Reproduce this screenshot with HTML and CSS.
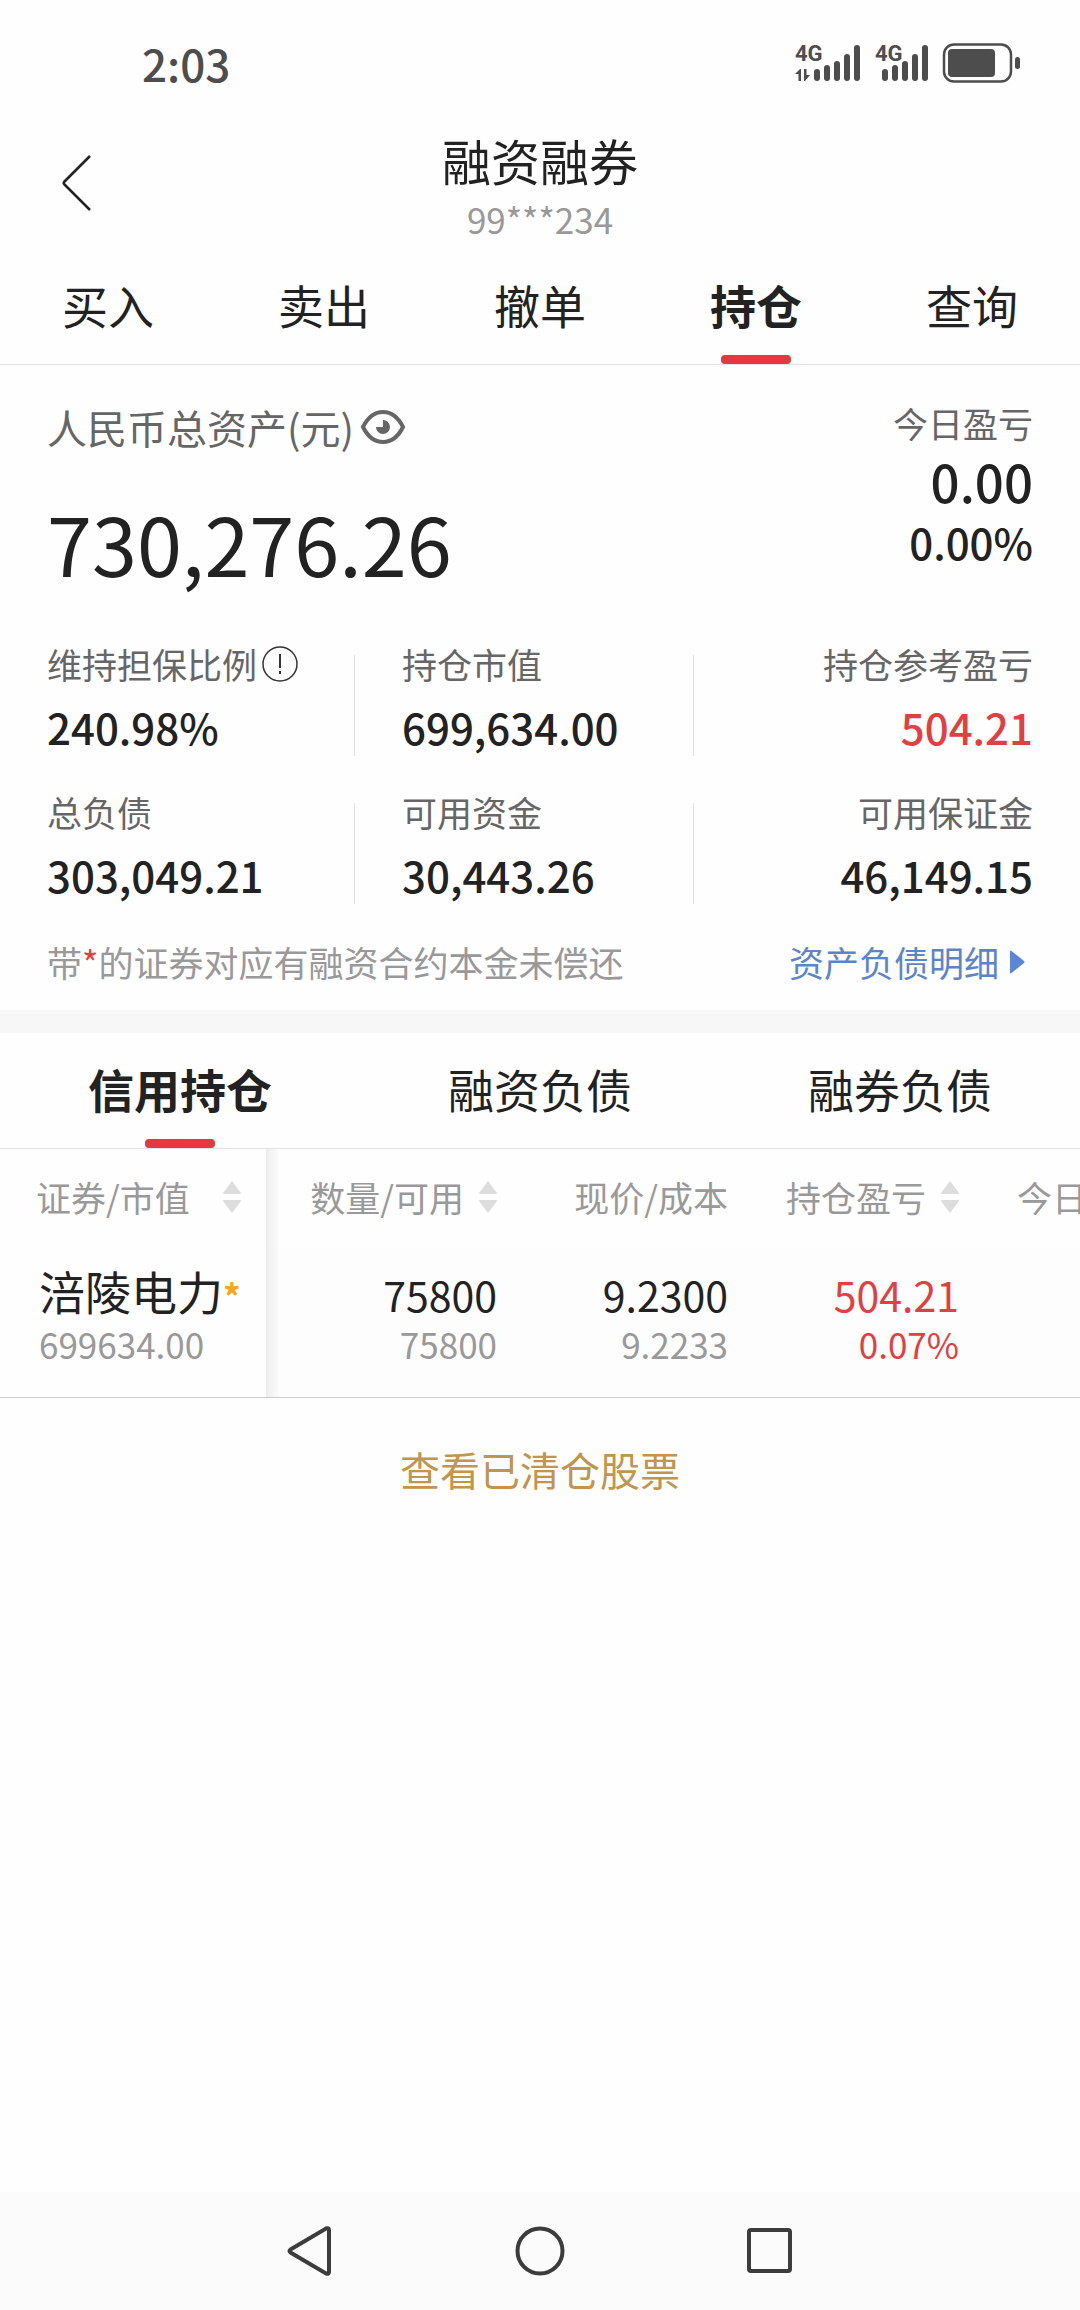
FILE: index.html
```html
<!DOCTYPE html>
<html lang="zh-CN">
<head>
    <meta charset="UTF-8">
    <meta name="viewport" content="width=device-width, initial-scale=1.0">
    <link rel="stylesheet" href="styles.css">
    <title>融资融券</title>
</head>
<body>
    <div class="status-bar">
        <span class="time">2:03</span>
        <svg class="status-icons" width="226" height="40" viewBox="0 0 226 40" aria-hidden="true">
            <g fill="#4d4d4d">
                <text class="net" x="0" y="18">4G</text>
                <path d="M0 31l5-5h1v12H3.500v-7zM9 26h2.500v6H15l-5 6H9z"/>
                <rect x="19" y="26" width="6" height="12" rx="3"/>
                <rect x="29" y="22" width="6" height="16" rx="3"/>
                <rect x="39" y="18" width="6" height="20" rx="3"/>
                <rect x="49" y="11" width="6" height="27" rx="3"/>
                <rect x="59" y="2" width="6" height="36" rx="3"/>
                <text class="net" x="80" y="18">4G</text>
                <rect x="87" y="26" width="6" height="12" rx="3"/>
                <rect x="97" y="22" width="6" height="16" rx="3"/>
                <rect x="107" y="18" width="6" height="20" rx="3"/>
                <rect x="117" y="11" width="6" height="27" rx="3"/>
                <rect x="127" y="2" width="6" height="36" rx="3"/>
                <rect x="153" y="6" width="47" height="28" rx="4"/>
                <rect x="220" y="14" width="5" height="12" rx="2.500"/>
            </g>
            <rect x="149" y="1.500" width="67" height="37" rx="10" fill="none" stroke="#4d4d4d" stroke-width="2.500"/>
        </svg>
    </div>

    <header class="header">
        <button type="button" class="back" aria-label="返回">
            <svg width="30" height="58" viewBox="0 0 30 58"><path d="M28 2L2.500 27.500q-1.500 1.500 0 3L28 56" fill="none" stroke="#222" stroke-width="2.500"/></svg>
        </button>
        <div class="heading">
            <h1>融资融券</h1>
            <p class="account">99***234</p>
        </div>
    </header>

    <nav class="tabs">
        <a href="#">买入</a>
        <a href="#">卖出</a>
        <a href="#">撤单</a>
        <a href="#" class="active">持仓</a>
        <a href="#">查询</a>
    </nav>

    <section class="summary">
        <div class="total">
            <div>
                <div class="total-label">
                    <span>人民币总资产(元)</span>
                    <button type="button" aria-label="隐藏金额">
                        <svg width="46" height="36" viewBox="0 0 46 36">
                            <path d="M3 18C8 8 15 3 23 3s15 5 20 15c-5 10-12 15-20 15S8 28 3 18z" fill="none" stroke="#666" stroke-width="4"/>
                            <path d="M23 11v7h-7a7 7 0 1 0 7-7z" fill="#666"/>
                        </svg>
                    </button>
                </div>
                <p class="total-value">730,276.26</p>
            </div>
            <div class="today">
                <p class="today-label">今日盈亏</p>
                <p class="today-value">0.00</p>
                <p class="today-rate">0.00%</p>
            </div>
        </div>

        <dl class="stats">
            <div class="stat">
                <dt>维持担保比例
                    <button type="button" aria-label="说明">
                        <svg width="36" height="36" viewBox="0 0 36 36">
                            <circle cx="18" cy="18" r="17" fill="none" stroke="#333" stroke-width="1.500"/>
                            <path d="M18 8v14M18 25v3" stroke="#333" stroke-width="2"/>
                        </svg>
                    </button>
                </dt>
                <dd>240.98%</dd>
            </div>
            <div class="stat">
                <dt>持仓市值</dt>
                <dd>699,634.00</dd>
            </div>
            <div class="stat">
                <dt>持仓参考盈亏</dt>
                <dd class="red">504.21</dd>
            </div>
            <div class="stat">
                <dt>总负债</dt>
                <dd>303,049.21</dd>
            </div>
            <div class="stat">
                <dt>可用资金</dt>
                <dd>30,443.26</dd>
            </div>
            <div class="stat">
                <dt>可用保证金</dt>
                <dd>46,149.15</dd>
            </div>
        </dl>

        <div class="note">
            <p>带<span class="red">*</span>的证券对应有融资合约本金未偿还</p>
            <a href="#">资产负债明细
                <svg width="16" height="24" viewBox="0 0 16 24"><path d="M1 1.500Q1 0 2.500 1L15 11q1 1 0 2L2.500 23Q1 24 1 22.500z" fill="#5c85d6"/></svg>
            </a>
        </div>
    </section>

    <nav class="tabs sub-tabs">
        <a href="#" class="active">信用持仓</a>
        <a href="#">融资负债</a>
        <a href="#">融券负债</a>
    </nav>

    <div class="table-wrap">
        <table>
            <thead>
                <tr>
                    <th scope="col" class="fixed"><button type="button" class="sort">证券/市值<svg width="18" height="34" viewBox="0 0 18 34"><path d="M9 1l9 12q0 1-1 1H1q-1 0-1-1zM9 33l9-12q0-1-1-1H1q-1 0-1 1z" fill="#ddd"/></svg></button></th>
                    <th scope="col"><button type="button" class="sort">数量/可用<svg width="18" height="34" viewBox="0 0 18 34"><path d="M9 1l9 12q0 1-1 1H1q-1 0-1-1zM9 33l9-12q0-1-1-1H1q-1 0-1 1z" fill="#ddd"/></svg></button></th>
                    <th scope="col">现价/成本</th>
                    <th scope="col"><button type="button" class="sort">持仓盈亏<svg width="18" height="34" viewBox="0 0 18 34"><path d="M9 1l9 12q0 1-1 1H1q-1 0-1-1zM9 33l9-12q0-1-1-1H1q-1 0-1 1z" fill="#ddd"/></svg></button></th>
                    <th scope="col"><button type="button" class="sort">今日盈亏<svg width="18" height="34" viewBox="0 0 18 34"><path d="M9 1l9 12q0 1-1 1H1q-1 0-1-1zM9 33l9-12q0-1-1-1H1q-1 0-1 1z" fill="#ddd"/></svg></button></th>
                </tr>
            </thead>
            <tbody>
                <tr>
                    <td class="fixed">
                        <p class="name">涪陵电力<span class="star">*</span></p>
                        <p class="sub">699634.00</p>
                    </td>
                    <td>
                        <p class="num">75800</p>
                        <p class="sub">75800</p>
                    </td>
                    <td>
                        <p class="num">9.2300</p>
                        <p class="sub">9.2233</p>
                    </td>
                    <td class="red">
                        <p class="num">504.21</p>
                        <p class="sub">0.07%</p>
                    </td>
                    <td></td>
                </tr>
            </tbody>
        </table>
    </div>

    <a href="#" class="cleared">查看已清仓股票</a>

    <div class="nav-bar">
        <button type="button" aria-label="后退">
            <svg width="50" height="50" viewBox="0 0 50 50"><path d="M5.500 23.500L41 2.500q3-1 3 1.500v42q0 2.500-3 1.500L5.500 26.500q-2-1.500 0-3z" fill="none" stroke="#3c3c3c" stroke-width="4"/></svg>
        </button>
        <button type="button" aria-label="主屏幕">
            <svg width="50" height="50" viewBox="0 0 50 50"><circle cx="25" cy="25" r="22.500" fill="none" stroke="#3c3c3c" stroke-width="4"/></svg>
        </button>
        <button type="button" aria-label="最近任务">
            <svg width="50" height="50" viewBox="0 0 50 50"><rect x="4" y="4" width="41" height="41" rx="2" fill="none" stroke="#3c3c3c" stroke-width="4"/></svg>
        </button>
    </div>
</body>
</html>
```
FILE: styles.css
```css
* {
    box-sizing: border-box;
}

body {
    font-family: "Noto Sans CJK SC", sans-serif;
    background-color: #fefefe;
    color: #222;
    margin: 0;
    min-height: 100vh;
    display: flex;
    flex-direction: column;
}

h1, p, dl, dd {
    margin: 0;
}

a {
    color: inherit;
    text-decoration: none;
}

button {
    font: inherit;
    color: inherit;
    background: none;
    border: none;
    padding: 0;
    cursor: pointer;
}

svg {
    display: block;
}

.red {
    color: #e04040;
}

/* Status bar */
.status-bar {
    display: flex;
    justify-content: space-between;
    align-items: center;
    height: 126px;
    padding: 0 59px 0 142px;
}

.status-icons {
    overflow: visible;
}

.time {
    font-size: 44px;
    font-weight: 500;
    color: #4d4d4d;
}

.net {
    font-family: Roboto, sans-serif;
    font-size: 22px;
    font-weight: 700;
}

/* Header */
.header {
    display: grid;
    grid-template-columns: 1fr auto 1fr;
    align-items: center;
    padding-top: 4px;
}

.back {
    justify-self: start;
    padding: 0 0 6px 62px;
}

.heading {
    text-align: center;
}

h1 {
    font-size: 49px;
    font-weight: 400;
    line-height: 60px;
}

.account {
    margin-top: 6px;
    font-size: 35px;
    line-height: 45px;
    color: #999;
}

/* Tabs */
.tabs {
    display: flex;
    border-bottom: 1px solid #e2e2e2;
}

.tabs a {
    flex: 1;
    display: flex;
    flex-direction: column;
    align-items: center;
    gap: 21px;
    padding-top: 33px;
    font-size: 46px;
    line-height: 60px;
}

.tabs a::after {
    content: "";
    width: 70px;
    height: 9px;
    border-radius: 4px;
}

.tabs .active {
    font-weight: 700;
}

.tabs .active::after {
    background-color: #e4393c;
}

.sub-tabs {
    border-top: 23px solid #f7f7f7;
}

.sub-tabs a {
    padding-top: 25px;
}

/* Asset summary */
.summary {
    padding: 37px 47px 23px;
}

.total {
    display: flex;
    justify-content: space-between;
}

.total-label {
    display: flex;
    align-items: center;
    gap: 6px;
    font-size: 40px;
    line-height: 50px;
    color: #666;
}

.total-value {
    margin-top: 40px;
    font-size: 81px;
    line-height: 100px;
}

.today {
    display: flex;
    flex-direction: column;
    gap: 4px;
    text-align: right;
    font-weight: 500;
}

.today-label {
    font-size: 35px;
    font-weight: 400;
    line-height: 42px;
    color: #666;
}

.today-value {
    font-size: 51px;
    line-height: 66px;
}

.today-rate {
    font-size: 42px;
    line-height: 48px;
}

.stats {
    display: grid;
    grid-template-columns: 308fr 339fr 339fr;
    row-gap: 30px;
    margin-top: 47px;
}

/* The thin divider is shorter than the cell */
.stat {
    background: linear-gradient(#e2e2e2, #e2e2e2) right 16px / 1px 101px no-repeat;
}

.stat:nth-child(3n + 2) {
    padding-left: 47px;
}

.stat:nth-child(3n) {
    background: none;
    text-align: right;
}

.stat dt {
    display: flex;
    align-items: center;
    gap: 5px;
    font-size: 35px;
    line-height: 50px;
    color: #666;
}

.stat:nth-child(3n) dt {
    justify-content: flex-end;
}

.stat dd {
    margin-top: 8px;
    font-size: 42px;
    font-weight: 500;
    line-height: 60px;
}

.note {
    display: flex;
    justify-content: space-between;
    margin-top: 32px;
    font-size: 35px;
    line-height: 50px;
    color: #999;
}

.note a {
    display: flex;
    align-items: center;
    gap: 10px;
    padding-right: 8px;
    color: #5c85c8;
}

/* Holdings table */
.table-wrap {
    overflow: hidden;
    border-bottom: 1px solid #ccc;
}

table {
    table-layout: fixed;
    width: 1190px;
    border-collapse: separate;
    border-spacing: 0;
}

th, td {
    padding: 0;
    text-align: right;
    vertical-align: top;
}

th {
    height: 98px;
    padding-bottom: 3px;
    vertical-align: middle;
    font-size: 35px;
    font-weight: 400;
    line-height: 44px;
    color: #999;
}

td {
    height: 150px;
    padding-top: 19px;
    background-color: #fdfdfd;
}

.fixed {
    position: sticky;
    left: 0;
    width: 266px;
    padding-left: 39px;
    background-color: #fefefe;
    text-align: left;
}

/* Shadow that the fixed column casts on the scrolling ones */
.fixed::after {
    content: "";
    position: absolute;
    top: 0;
    bottom: 0;
    left: 100%;
    width: 14px;
    background: linear-gradient(to right, #ececec, rgba(254, 254, 254, 0));
}

th.fixed {
    padding-left: 36px;
    padding-right: 25px;
}

.sort {
    display: flex;
    align-items: center;
    justify-content: flex-end;
    gap: 15px;
    width: 100%;
}

.fixed .sort {
    justify-content: space-between;
}

.name {
    height: 48px;
    font-size: 46px;
    line-height: 48px;
}

.name + .sub {
    margin-top: 8px;
}

.star {
    font-size: 35px;
    font-weight: 700;
    color: #f5a623;
}

.num {
    font-size: 41px;
    line-height: 56px;
}

.sub {
    font-size: 35px;
    line-height: 44px;
    color: #999;
}

.red .sub {
    color: inherit;
}

.cleared {
    align-self: center;
    margin-top: 41px;
    font-size: 40px;
    line-height: 60px;
    color: #c0954e;
}

/* System navigation */
.nav-bar {
    display: flex;
    justify-content: center;
    align-items: center;
    gap: 180px;
    height: 118px;
    margin-top: auto;
    background-color: #fbfbfb;
}
```
